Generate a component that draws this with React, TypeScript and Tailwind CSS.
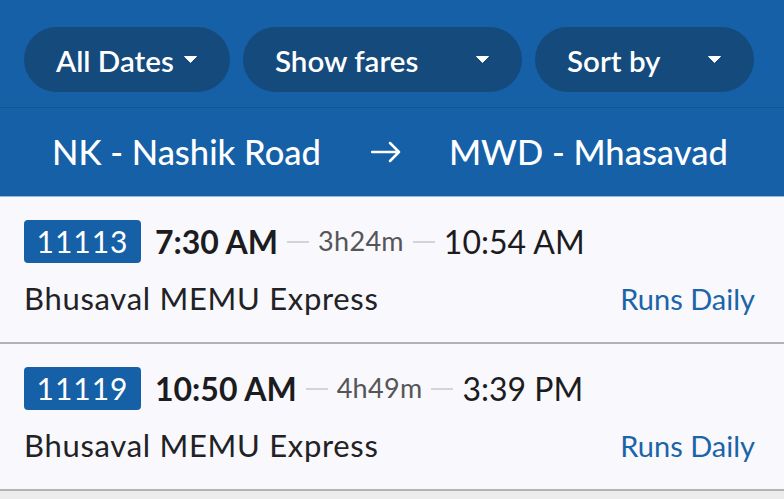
const trains = [
  { no: "11113", dep: "7:30 AM", dur: "3h24m", arr: "10:54 AM", name: "Bhusaval MEMU Express" },
  { no: "11119", dep: "10:50 AM", dur: "4h49m", arr: "3:39 PM", name: "Bhusaval MEMU Express" },
];

const Caret = () => (
  <svg width="13" height="7" viewBox="0 0 13 7" className="shrink-0">
    <path d="M0.5 0.5 L12.5 0.5 L6.5 6.5 Z" fill="white" stroke="white" strokeWidth="1" strokeLinejoin="round" />
  </svg>
);

const Chip = ({ label, width }: { label: string; width: string }) => (
  <button className={`${width} h-[65px] rounded-full bg-[#154a7d] flex items-center justify-between pl-8 pr-[33px] text-white text-[29.5px] font-semibold`}>
    <span className="leading-none pt-[2px]">{label}</span>
    <Caret />
  </button>
);

const Dash = () => <span className="mx-[9px] w-[22px] h-[2px] bg-[#d4d4d8]" />;

export default function App() {
  return (
    <div className="min-h-screen bg-[#ececec] font-['Lato','Noto_Sans',sans-serif]">
      <div className="bg-[#1660a8]">
        <div className="flex gap-[13px] pl-6 pt-[27px] pb-[15px] border-b border-[#15538f]">
          <Chip label="All Dates" width="w-[206px]" />
          <Chip label="Show fares" width="w-[279px]" />
          <Chip label="Sort by" width="w-[219px]" />
        </div>
        <div className="h-[89px] flex items-center text-white text-[34.5px] font-medium border-b border-[#8fb8de]">
          <span className="ml-[52px]">NK - Nashik Road</span>
          <span className="ml-[50px] mr-[48px] flex">
            <svg width="30" height="22" viewBox="0 0 30 22">
              <path d="M1 11 H28 M19 2 L28 11 L19 20" fill="none" stroke="white" strokeWidth="2.5" strokeLinecap="round" strokeLinejoin="round" />
            </svg>
          </span>
          <span>MWD - Mhasavad</span>
        </div>
      </div>
      {trains.map((t) => (
        <div key={t.no} className="bg-[#f8f8fd] border-b-2 border-[#b3b3b5] h-[147px] pl-6 pr-[29px] pt-[23px]">
          <div className="flex items-center h-[43px]">
            <span className="bg-[#1660a8] text-white text-[30px] tracking-[1px] rounded-[4px] h-[43px] w-[117px] flex items-center justify-center">
              {t.no}
            </span>
            <span className="ml-[14px] text-[32px] font-bold text-[#1c1c1e]">{t.dep}</span>
            <Dash />
            <span className="text-[27px] tracking-[0.3px] text-[#555558]">{t.dur}</span>
            <Dash />
            <span className="text-[32px] text-[#1c1c1e]">{t.arr}</span>
          </div>
          <div className="flex items-center justify-between mt-[12px]">
            <span className="text-[31px] tracking-[0.7px] text-[#222224]">{t.name}</span>
            <span className="text-[29px] text-[#1a64a8]">Runs Daily</span>
          </div>
        </div>
      ))}
    </div>
  );
}
